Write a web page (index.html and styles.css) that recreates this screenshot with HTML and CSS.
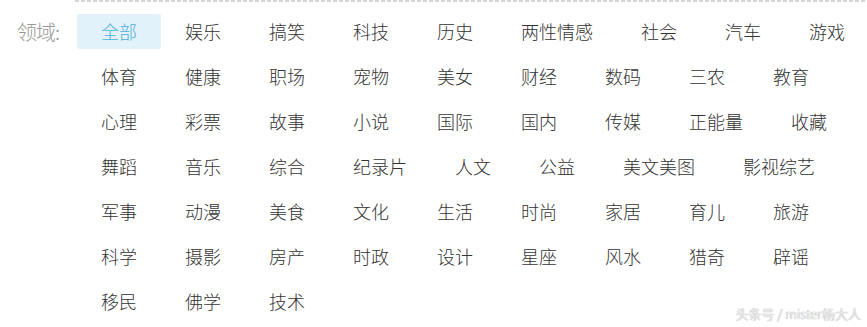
FILE: index.html
```html
<!DOCTYPE html>
<html>
  <head>
    <title>领域</title>
    <meta name="viewport" content="width=device-width, initial-scale=1.0" />
    <link rel="stylesheet" href="styles.css">
  </head>
  <body>
    <div class="field">
      <span class="field-label">领域:</span>
      <ul class="tag-list">
        <li class="tag active">全部</li>
        <li class="tag">娱乐</li>
        <li class="tag">搞笑</li>
        <li class="tag">科技</li>
        <li class="tag">历史</li>
        <li class="tag">两性情感</li>
        <li class="tag">社会</li>
        <li class="tag">汽车</li>
        <li class="tag">游戏</li>
        <li class="tag">体育</li>
        <li class="tag">健康</li>
        <li class="tag">职场</li>
        <li class="tag">宠物</li>
        <li class="tag">美女</li>
        <li class="tag">财经</li>
        <li class="tag">数码</li>
        <li class="tag">三农</li>
        <li class="tag">教育</li>
        <li class="tag">心理</li>
        <li class="tag">彩票</li>
        <li class="tag">故事</li>
        <li class="tag">小说</li>
        <li class="tag">国际</li>
        <li class="tag">国内</li>
        <li class="tag">传媒</li>
        <li class="tag">正能量</li>
        <li class="tag">收藏</li>
        <li class="tag">舞蹈</li>
        <li class="tag">音乐</li>
        <li class="tag">综合</li>
        <li class="tag">纪录片</li>
        <li class="tag">人文</li>
        <li class="tag">公益</li>
        <li class="tag">美文美图</li>
        <li class="tag">影视综艺</li>
        <li class="tag">军事</li>
        <li class="tag">动漫</li>
        <li class="tag">美食</li>
        <li class="tag">文化</li>
        <li class="tag">生活</li>
        <li class="tag">时尚</li>
        <li class="tag">家居</li>
        <li class="tag">育儿</li>
        <li class="tag">旅游</li>
        <li class="tag">科学</li>
        <li class="tag">摄影</li>
        <li class="tag">房产</li>
        <li class="tag">时政</li>
        <li class="tag">设计</li>
        <li class="tag">星座</li>
        <li class="tag">风水</li>
        <li class="tag">猎奇</li>
        <li class="tag">辟谣</li>
        <li class="tag">移民</li>
        <li class="tag">佛学</li>
        <li class="tag">技术</li>
      </ul>
    </div>

    <!-- watermark -->
    <div class="watermark">头条号 / mister杨大人</div>
  </body>
</html>
```

FILE: styles.css
```css
/* Base styles */
html,
body {
  overflow: hidden;
}

body {
  font-family: "Microsoft YaHei", "Noto Sans CJK SC", sans-serif;
  margin: 0;
  padding: 0;
  background: #fff;
  color: #333;
  height: 327px;
  position: relative;
}

.field {
  display: flex;
  align-items: flex-start;
}

.field-label {
  flex-shrink: 0;
  width: 58px;
  padding-left: 17px;
  margin-top: 14px;
  line-height: 35px;
  font-size: 20px;
  font-weight: 300;
  letter-spacing: -1px;
  color: #999;
  white-space: nowrap;
}

.tag-list {
  list-style-type: none;
  margin: 0;
  padding: 14px 0 0 2px;
  width: 800px;
  flex-shrink: 0;
  display: flex;
  flex-wrap: wrap;
  background: repeating-linear-gradient(to right, #d6d6d6 0 4px, transparent 4px 6px) top left / 100% 2px no-repeat;
}

.tag {
  padding: 0 24px;
  margin-bottom: 10px;
  line-height: 35px;
  font-size: 18px;
  font-weight: 300;
  color: #333;
  border-radius: 2px;
}

.tag.active {
  background-color: #e2f2fb;
  color: #4eaed8;
}

.watermark {
  position: absolute;
  right: 6px;
  bottom: 4px;
  font-size: 13px;
  font-weight: 300;
  color: #fff;
  text-shadow: 0 0 1px #999, 0 0 1px #999;
}
```
